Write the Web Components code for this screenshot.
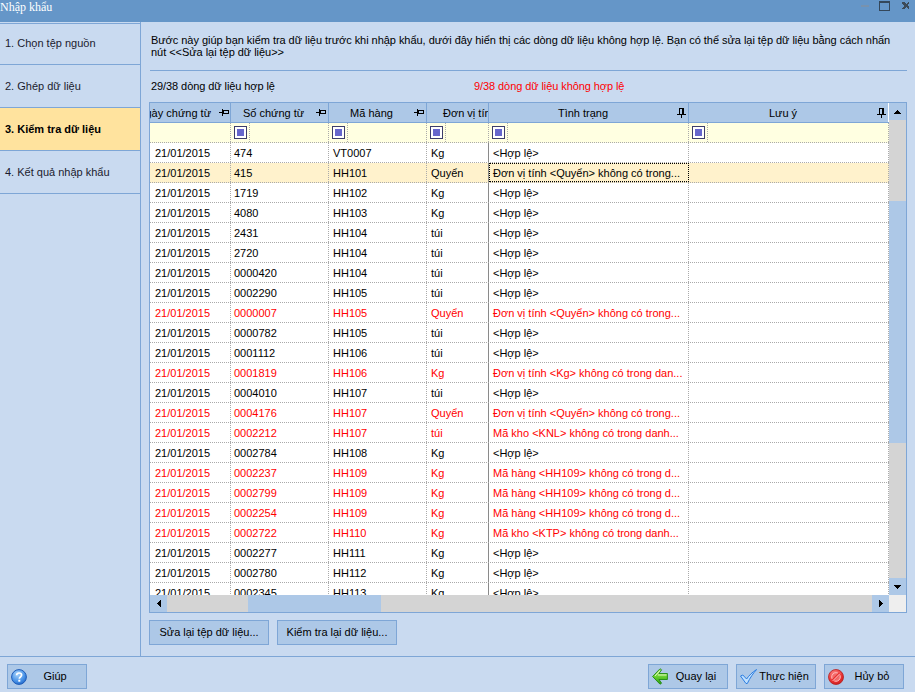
<!DOCTYPE html>
<html lang="vi">
<head>
<meta charset="utf-8">
<title>Nhập khẩu</title>
<style>
html,body{margin:0;padding:0;height:100%;overflow:hidden;background:#c9daf0}
body{font:11px "Liberation Sans",Arial,sans-serif;color:#000}
</style>
</head>
<body>
<nk-app></nk-app>
<script>
const BORDER='#7ea6d6';
function def(name,css,html){
  customElements.define(name,class extends HTMLElement{
    constructor(){
      super();
      const r=this.attachShadow({mode:'open'});
      r.innerHTML='<style>'+css+'</style>'+(typeof html==='function'?html(this):html);
    }
  });
}
const ICONS={
 help:`<svg width="16" height="16" viewBox="0 0 16 16"><defs><radialGradient id="h" cx=".4" cy=".3" r=".8"><stop offset="0" stop-color="#a9d4fb"/><stop offset=".6" stop-color="#4a94e8"/><stop offset="1" stop-color="#1a5fc4"/></radialGradient></defs><circle cx="8" cy="8" r="7.4" fill="url(#h)" stroke="#1d5cb8"/><path d="M5.6 6.2C5.7 4.7 6.8 4 8.1 4c1.4 0 2.5.8 2.5 2.1 0 1.9-2.3 1.9-2.3 3.6" fill="none" stroke="#fff" stroke-width="1.7"/><rect x="7.3" y="10.7" width="2" height="2" fill="#fff"/></svg>`,
 back:`<svg width="16" height="17" viewBox="0 0 16 17"><defs><linearGradient id="b" x1="0" y1="0" x2="0" y2="1"><stop offset="0" stop-color="#c4f28a"/><stop offset=".55" stop-color="#62cc2c"/><stop offset="1" stop-color="#2e9a12"/></linearGradient></defs><path d="M.6 8.500 8 .8l1.600 1L7 5.500h8.400v6H7l2.600 3.700-1.600 1Z" fill="url(#b)" stroke="#1f8a10" stroke-width=".9" stroke-linejoin="round"/><path d="M3 8 7.700 3M6 7h8.500" fill="none" stroke="#e4fbc4" stroke-width=".9"/></svg>`,
 check:`<svg width="17" height="15" viewBox="0 0 17 15"><path d="M.5 7 2.800 6l3.800 4C9 6.400 12.600 3 16.600.5 13.400 4 10 8.800 7.300 14.500H6Z" fill="#bfe0ff" stroke="#2b7de0" stroke-width="1" stroke-linejoin="round"/></svg>`,
 cancel:`<svg width="16" height="16" viewBox="0 0 16 16"><defs><radialGradient id="c" cx=".4" cy=".3" r=".85"><stop offset="0" stop-color="#ff8c8c"/><stop offset=".6" stop-color="#e83030"/><stop offset="1" stop-color="#b81a1a"/></radialGradient></defs><circle cx="8" cy="8" r="7.500" fill="url(#c)" stroke="#b52020" stroke-width=".8"/><circle cx="8" cy="8" r="4.300" fill="#f26a6a" stroke="#ffb8b8" stroke-width="1"/><path d="M4.500 11.500 11.500 4.500" stroke="#e82a2a" stroke-width="2.400"/><path d="M4.800 11.800 11.800 4.800" stroke="#fff" stroke-width=".8"/></svg>`,
 pinH:`<svg width="10" height="9" viewBox="0 0 10 9" shape-rendering="crispEdges"><path d="M0 4h3v1H0zM3 1h1v7H3zM4 2h6v1H4zM4 5h6v1H4zM9 2h1v4H9zM4 3h1v3H4z" fill="#000"/></svg>`,
 pinV:`<svg width="9" height="10" viewBox="0 0 9 10" shape-rendering="crispEdges"><path d="M2 0h5v1H2zM2 1h1v5H2zM6 1h1v5H6zM0 6h9v1H0zM4 7h1v3H4z" fill="#000"/><rect x="5" y="1" width="1" height="5" fill="#000"/></svg>`
};

def('nk-titlebar',`
:host{display:flex;align-items:flex-start;height:22px;background:#6596c8;color:#fff;font:12px/15px "Liberation Serif","Times New Roman",serif;flex:none}
.t{flex:1}
.c{display:flex;padding-right:5px}
svg{display:block}
`,`<div class="t"><slot></slot></div><div class="c">
<svg width="55" height="14" viewBox="0 0 55 14" shape-rendering="crispEdges"><rect x="6" y="5" width="8" height="2" fill="#7892ae"/><path d="M24 1h11v10H24zM25 3v7h9V3z" fill="#34475a" fill-rule="evenodd"/><path d="M47 2h2l2 2 2-2h1v1l-2 2 2 2 0 2h-1l-2-2-2 2h-2V8l2-2-2-2z" fill="#3c4a58"/></svg></div>`);

def('nk-step',`
:host{display:flex;align-items:center;box-sizing:border-box;height:43px;padding:0 0 0 5px;border-bottom:1px solid ${BORDER};color:#1b1b2e;flex:none}
:host([first]){height:42px;border-top:1px solid ${BORDER};padding-bottom:2px}
:host([active]){background:#ffe39e;font-weight:bold;color:#000}
`,`<slot></slot>`);

def('nk-sidebar',`
:host{display:flex;flex-direction:column;box-sizing:border-box;width:141px;flex:none;padding-top:1px;border-right:1px solid ${BORDER}}
`,`<slot></slot>`);

def('nk-btn',`
:host{display:grid;box-sizing:border-box;width:80px;height:25px;background:#adc8e7;border:1px solid ${BORDER};align-items:center;color:#000;flex:none}
:host([wide]){width:120px}
.i,.l{grid-area:1/1}
.i{justify-self:start;padding-left:3px;display:flex}
.l{justify-self:center;padding-bottom:1px}
:host([icon]) .l{padding-left:16px}
:host([wide]) .l{padding-left:0}
`,e=>`<span class="i">${ICONS[e.getAttribute('icon')]||''}</span><span class="l"><slot></slot></span>`);

def('nk-scroll',`
:host{display:flex;background:#d4d4d4;flex:none}
:host([dir=v]){flex-direction:column;width:17px}
:host([dir=h]){height:17px}
.b{flex:none;background:#adc8e7;display:flex;align-items:center;justify-content:center;width:17px;height:17px}
.g{flex:none}
.f{flex:1}
.th{flex:none;background:#adc8e7}
svg{display:block}
.corner{flex:none;width:17px;height:17px;background:#eeeeee}
`,e=>{
  const v=e.getAttribute('dir')==='v';
  const tri=(p,w,h)=>`<svg width="${w}" height="${h}" viewBox="0 0 ${w} ${h}" shape-rendering="crispEdges"><path d="${p}" fill="#000"/></svg>`;
  if(v) return `<div class="b">${tri('M3 0h1v1h1v1h1v1h1v1H0V3h1V2h1V1h1z',7,4)}</div><div class="g" style="height:81px"></div><div class="th" style="height:242px"></div><div class="f"></div><div class="b">${tri('M0 0h7v1H6v1H5v1H4v1H3V3H2V2H1V1H0z',7,4)}</div>`;
  return `<div class="b">${tri('M3 0h1v7H3V6H2V5H1V4H0V3h1V2h1V1h1z',4,7)}</div><div class="g" style="width:81px"></div><div class="th" style="width:133px"></div><div class="f"></div><div class="b">${tri('M0 0h1v1h1v1h1v1h1v1H3v1H2v1H1v1H0z',4,8)}</div><div class="corner"></div>`;
});

const COLS='81px 98px 98px 62px 200px 200px';
const Q='Đơn vị tính <Quyển> không có trong...';
const K='Đơn vị tính <Kg> không có trong dan...';
const H='Mã hàng <HH109> không có trong d...';
const OK='<Hợp lệ>';
const ROWS=[
['474','VT0007','Kg',OK],
['415','HH101','Quyển',Q,'sel'],
['1719','HH102','Kg',OK],
['4080','HH103','Kg',OK],
['2431','HH104','túi',OK],
['2720','HH104','túi',OK],
['0000420','HH104','túi',OK],
['0002290','HH105','túi',OK],
['0000007','HH105','Quyển',Q,'err'],
['0000782','HH105','túi',OK],
['0001112','HH106','túi',OK],
['0001819','HH106','Kg',K,'err'],
['0004010','HH107','túi',OK],
['0004176','HH107','Quyển',Q,'err'],
['0002212','HH107','túi','Mã kho <KNL> không có trong danh...','err'],
['0002784','HH108','Kg',OK],
['0002237','HH109','Kg',H,'err'],
['0002799','HH109','Kg',H,'err'],
['0002254','HH109','Kg',H,'err'],
['0002722','HH110','Kg','Mã kho <KTP> không có trong danh...','err'],
['0002277','HH111','Kg',OK],
['0002780','HH112','Kg',OK],
['0002345','HH113','Kg',OK]];
const esc=s=>s.replace(/&/g,'&amp;').replace(/</g,'&lt;').replace(/>/g,'&gt;');

def('nk-grid',`
:host{display:flex;flex-direction:column;box-sizing:border-box;flex:none;width:758px;height:511px;border:1px solid ${BORDER};background:#fff}
.top{display:flex;height:492px;flex:none}
.tbl{flex:1;min-width:0;overflow:hidden;background:#fff}
.r{display:grid;grid-template-columns:${COLS};box-sizing:border-box;height:20px;width:739px}
.hd{background:#adc8e7;border-bottom:1px solid ${BORDER}}
.hd>div{display:flex;align-items:center;overflow:hidden;white-space:nowrap;border-right:1px solid ${BORDER};padding-right:2px;box-sizing:border-box}
.hd .l{flex:1;text-align:center;min-width:0}
.hd>div:last-child{border-right:1px solid #fff}
.hd .h1{justify-content:flex-end;padding-right:1px}
.hd .h1 .l{flex:none;margin-right:8px}
.hd .h4{padding:0 0 0 16px}
.hd .h4 .l{flex:none;text-align:left}
.hd svg{flex:none;display:block}
.fl{background:#ffffe1;border-bottom:1px dotted #aaa}
.fl>div{display:flex;align-items:center;border-right:1px dotted #aaa;box-sizing:border-box;padding-left:3px}
.fb{display:flex;align-items:center;height:100%;padding-right:2px;border-right:1px dotted #aaa}
.fi{box-sizing:border-box;width:13px;height:13px;border:1px solid #3d3d6b;background:#fff;display:flex;align-items:center;justify-content:center}
.fi i{display:block;width:7px;height:7px;background:#6666cc}
.d{border-bottom:1px dotted #aaa}
.d>div{box-sizing:border-box;border-right:1px dotted #aaa;padding-left:4px;line-height:21px;white-space:nowrap;overflow:hidden}
.d>div:first-child{padding-left:5px}
.d>div:nth-child(2){padding-left:3px}
.d>div:nth-child(4){border-right:1px solid #8a8a8a}
.sel{background:#fff2cc}
.err{color:#f00}
.foc{outline:1px dotted #000;outline-offset:-1px}
`,()=>{
 const ph=ICONS.pinH,pv=ICONS.pinV;
 const fc=`<div><span class="fb"><span class="fi"><i></i></span></span></div>`;
 let h=`<div class="top"><div class="tbl">
 <div class="r hd">
  <div class="h1"><span class="l">Ngày chứng từ</span>${ph}</div>
  <div><span class="l">Số chứng từ</span>${ph}</div>
  <div><span class="l">Mã hàng</span>${ph}</div>
  <div class="h4"><span class="l">Đơn vị tính</span></div>
  <div><span class="l">Tình trạng</span>${pv}</div>
  <div><span class="l">Lưu ý</span>${pv}</div>
 </div>
 <div class="r fl"><div></div>${fc}${fc}${fc}${fc}${fc}</div>`;
 for(const r of ROWS){
  const c=r[4]||'';
  h+=`<div class="r d ${c}"><div>21/01/2015</div><div>${r[0]}</div><div>${r[1]}</div><div>${r[2]}</div><div class="${c==='sel'?'foc':''}">${esc(r[3])}</div><div></div></div>`;
 }
 h+=`</div><nk-scroll dir="v"></nk-scroll></div><nk-scroll dir="h"></nk-scroll>`;
 return h;
});

def('nk-main',`
:host{display:flex;flex-direction:column;flex:1;min-width:0;padding:12px 8px 0;box-sizing:border-box}
.desc{line-height:12px;padding-left:2px;height:24px;white-space:nowrap;letter-spacing:-.04px}
.rule{height:1px;background:${BORDER};margin:12px 0 0 1px}
.stats{display:flex;line-height:13px;padding-left:2px;margin:9px 0;letter-spacing:-.08px}
.stats span:first-child{width:323px}
.err{color:#f00}
.acts{display:flex;gap:8px;margin-top:7px}
`,`<div class="desc">Bước này giúp bạn kiểm tra dữ liệu trước khi nhập khẩu, dưới đây hiển thị các dòng dữ liệu không hợp lệ. Bạn có thể sửa lại tệp dữ liệu bằng cách nhấn<br>nút &lt;&lt;Sửa lại tệp dữ liệu&gt;&gt;</div>
<div class="rule"></div>
<div class="stats"><span>29/38 dòng dữ liệu hợp lệ</span><span class="err">9/38 dòng dữ liệu không hợp lệ</span></div>
<nk-grid></nk-grid>
<div class="acts"><nk-btn wide>Sửa lại tệp dữ liệu...</nk-btn><nk-btn wide>Kiểm tra lại dữ liệu...</nk-btn></div>`);

def('nk-footer',`
:host{display:flex;box-sizing:border-box;height:36px;flex:none;border-top:1px solid ${BORDER};padding:7px 11px 0 7px;gap:8px}
.s{flex:1}
`,`<nk-btn icon="help">Giúp</nk-btn><div class="s"></div><nk-btn icon="back">Quay lại</nk-btn><nk-btn icon="check">Thực hiện</nk-btn><nk-btn icon="cancel">Hủy bỏ</nk-btn>`);

def('nk-app',`
:host{display:flex;flex-direction:column;width:915px;height:692px;background:#c9daf0;overflow:hidden}
.body{display:flex;flex:1;min-height:0}
`,`<nk-titlebar>Nhập khẩu</nk-titlebar>
<div class="body"><nk-sidebar>
<nk-step first>1. Chọn tệp nguồn</nk-step>
<nk-step>2. Ghép dữ liệu</nk-step>
<nk-step active>3. Kiểm tra dữ liệu</nk-step>
<nk-step>4. Kết quả nhập khẩu</nk-step>
</nk-sidebar><nk-main></nk-main></div>
<nk-footer></nk-footer>`);
</script>
</body>
</html>
